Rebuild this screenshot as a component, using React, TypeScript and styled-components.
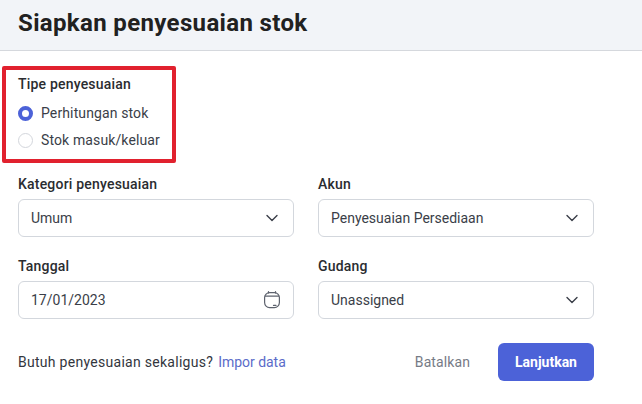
import React from "react";
import styled, { createGlobalStyle } from "styled-components";

const Global = createGlobalStyle`
  html, body { margin: 0; padding: 0; background: #fff; }
  body { font-family: Roboto, "Liberation Sans", sans-serif; color: #2b2f38; overflow: hidden; }
`;

const Page = styled.div`
  position: relative;
  width: 642px;
  height: 404px;
  overflow: hidden;
`;

const Header = styled.header`
  height: 51px;
  box-sizing: border-box;
  background: #f2f4f8;
  border-bottom: 1px solid #d5d8dd;
  padding: 6px 18px 0;
`;

const Title = styled.h1`
  margin: 0;
  font-size: 24px;
  line-height: 34px;
  font-weight: 700;
  letter-spacing: 0.35px;
  color: #212121;
`;

const Body = styled.div`
  padding: 24px 48px 0 18px;
`;

const Label = styled.div`
  font-size: 14px;
  line-height: 18px;
  font-weight: 500;
  letter-spacing: 0.2px;
  color: #2a2c30;
`;

const RadioGroup = styled.div`
  display: flex;
  flex-direction: column;
  gap: 9px;
  margin-top: 11px;
  margin-bottom: 26px;
`;

const RadioRow = styled.label`
  display: flex;
  align-items: center;
  gap: 8px;
  height: 18px;
  font-size: 14px;
  letter-spacing: 0.12px;
  color: #3a3e48;
`;

const RadioDot = styled.span<{ $on?: boolean }>`
  width: 15px;
  height: 15px;
  box-sizing: border-box;
  border-radius: 50%;
  background: #fff;
  border: ${(p) => (p.$on ? "4px solid #4c62d8" : "1px solid #d3d6dc")};
`;

const Grid = styled.div`
  display: grid;
  grid-template-columns: 276px 276px;
  column-gap: 24px;
  row-gap: 20px;
`;

const Field = styled.div`
  display: flex;
  flex-direction: column;
  gap: 6px;
`;

const Control = styled.div`
  height: 38px;
  box-sizing: border-box;
  display: flex;
  align-items: center;
  justify-content: space-between;
  padding: 0 13px 0 12px;
  background: #fff;
  border: 1px solid #d3d7dd;
  border-radius: 6px;
  font-size: 14px;
  color: #3a3e48;
`;

const Footer = styled.div`
  display: flex;
  align-items: center;
  justify-content: space-between;
  margin-top: 24px;
`;

const Hint = styled.div`
  font-size: 14px;
  letter-spacing: 0.28px;
  color: #33363d;
`;

const ImportLink = styled.a`
  margin-left: 5px;
  letter-spacing: -0.02px;
  color: #5b6cc9;
`;

const Actions = styled.div`
  display: flex;
  align-items: center;
  gap: 28px;
`;

const Cancel = styled.button`
  border: 0;
  background: none;
  padding: 0;
  font: 400 14px Roboto, sans-serif;
  letter-spacing: 0.1px;
  color: #767b86;
`;

const Primary = styled.button`
  width: 96px;
  height: 38px;
  border: 0;
  border-radius: 6px;
  background: #4c62d8;
  color: #fff;
  font: 700 14px Roboto, sans-serif;
`;

const Highlight = styled.div`
  position: absolute;
  left: 2px;
  top: 66px;
  width: 174px;
  height: 97px;
  box-sizing: border-box;
  border: 4px solid #e1212e;
  border-radius: 2px;
  pointer-events: none;
`;

const Chevron = () => (
  <svg width="16" height="16" viewBox="0 0 16 16" fill="none" stroke="#3a3e48" strokeWidth="1.4" strokeLinecap="round" strokeLinejoin="round">
    <path d="M3 5.5 8 10.5 13 5.5" />
  </svg>
);

const CalendarIcon = () => (
  <svg width="16" height="18" viewBox="0 0 16 18" fill="none" stroke="#5d626d" strokeWidth="1.2" strokeLinecap="round">
    <rect x="0.6" y="1.6" width="14.8" height="15" rx="5" />
    <path d="M1.5 5.2H14.5" strokeWidth="1.3" />
    <path d="M4.5 0.6V2M11.5 0.6V2" />
    <path d="M9.5 14.4H12" />
  </svg>
);

export default function App() {
  return (
    <Page>
      <Global />
      <Header>
        <Title>Siapkan penyesuaian stok</Title>
      </Header>
      <Body>
        <Label>Tipe penyesuaian</Label>
        <RadioGroup>
          <RadioRow><RadioDot $on />Perhitungan stok</RadioRow>
          <RadioRow><RadioDot />Stok masuk/keluar</RadioRow>
        </RadioGroup>
        <Grid>
          <Field>
            <Label>Kategori penyesuaian</Label>
            <Control>Umum<Chevron /></Control>
          </Field>
          <Field>
            <Label>Akun</Label>
            <Control>Penyesuaian Persediaan<Chevron /></Control>
          </Field>
          <Field>
            <Label>Tanggal</Label>
            <Control>17/01/2023<CalendarIcon /></Control>
          </Field>
          <Field>
            <Label>Gudang</Label>
            <Control>Unassigned<Chevron /></Control>
          </Field>
        </Grid>
        <Footer>
          <Hint>Butuh penyesuaian sekaligus?<ImportLink>Impor data</ImportLink></Hint>
          <Actions>
            <Cancel>Batalkan</Cancel>
            <Primary>Lanjutkan</Primary>
          </Actions>
        </Footer>
      </Body>
      <Highlight />
    </Page>
  );
}
